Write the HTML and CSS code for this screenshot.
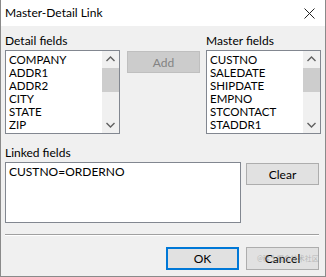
FILE: index.html
```html
<!DOCTYPE html>
<html lang="en">
<head>
    <meta charset="UTF-8">
    <title>Master-Detail Link</title>
    <link rel="stylesheet" href="styles.css">
</head>
<body>
    <div class="window">
        <div class="titlebar">
            <span class="title">Master-Detail Link</span>
            <svg class="close" width="11" height="11" viewBox="0 0 11 11">
                <path d="M0.5 0.5 L10.5 10.5 M10.5 0.5 L0.5 10.5" stroke="#222" stroke-width="1"/>
            </svg>
        </div>
        <div class="client">
            <div class="top-row">
                <div class="field-col">
                    <div class="label">Detail fields</div>
                    <div class="listbox">
                        <ul class="items">
                            <li>COMPANY</li>
                            <li>ADDR1</li>
                            <li>ADDR2</li>
                            <li>CITY</li>
                            <li>STATE</li>
                            <li>ZIP</li>
                        </ul>
                        <div class="scrollbar">
                            <svg class="arrow" width="17" height="17" viewBox="0 0 17 17"><path d="M4.5 10 L8.5 6 L12.5 10" fill="none" stroke="#606060" stroke-width="1.4"/></svg>
                            <div class="thumb"></div>
                            <div class="track"></div>
                            <svg class="arrow" width="17" height="17" viewBox="0 0 17 17"><path d="M4.5 7 L8.5 11 L12.5 7" fill="none" stroke="#606060" stroke-width="1.4"/></svg>
                        </div>
                    </div>
                </div>
                <div class="mid-col">
                    <button class="btn" disabled>Add</button>
                </div>
                <div class="field-col">
                    <div class="label">Master fields</div>
                    <div class="listbox">
                        <ul class="items">
                            <li>CUSTNO</li>
                            <li>SALEDATE</li>
                            <li>SHIPDATE</li>
                            <li>EMPNO</li>
                            <li>STCONTACT</li>
                            <li>STADDR1</li>
                        </ul>
                        <div class="scrollbar">
                            <svg class="arrow" width="17" height="17" viewBox="0 0 17 17"><path d="M4.5 10 L8.5 6 L12.5 10" fill="none" stroke="#606060" stroke-width="1.4"/></svg>
                            <div class="thumb"></div>
                            <div class="track"></div>
                            <svg class="arrow" width="17" height="17" viewBox="0 0 17 17"><path d="M4.5 7 L8.5 11 L12.5 7" fill="none" stroke="#606060" stroke-width="1.4"/></svg>
                        </div>
                    </div>
                </div>
            </div>

            <div class="label linked-label">Linked fields</div>
            <div class="linked-row">
                <div class="linked-box">CUSTNO=ORDERNO</div>
                <button class="btn">Clear</button>
            </div>

            <div class="separator"></div>

            <div class="bottom-row">
                <button class="btn btn-default">OK</button>
                <button class="btn">Cancel</button>
            </div>
        </div>
        <div class="watermark">@稀土掘金技术社区</div>
    </div>
</body>
</html>
```

FILE: styles.css
```css
body {
    margin: 0;
    font-family: Lato, "Noto Sans CJK SC", sans-serif;
    font-size: 12px;
    color: #000;
    background-color: #fff;
}
.window {
    position: relative;
    width: 326px;
    height: 277px;
    box-sizing: border-box;
    border-left: 1px solid #8a8a8a;
    border-right: 1px solid #8a8a8a;
    border-bottom: 1px solid #8a8a8a;
    background-color: #f0f0f0;
    overflow: hidden;
}
.titlebar {
    height: 26px;
    background-color: #fff;
    display: flex;
    align-items: center;
    justify-content: space-between;
    padding: 0 10px 0 4px;
}
.title {
    font-size: 12px;
    margin-top: -2px;
}
.close {
    display: block;
}
.client {
    padding: 7px 0 0 4px;
}
.top-row {
    display: flex;
}
.label {
    height: 16px;
    line-height: 16px;
}
.listbox {
    margin-top: 1px;
    width: 115px;
    height: 84px;
    box-sizing: border-box;
    border: 1px solid #828790;
    background-color: #fff;
    display: flex;
}
.items {
    flex: 1;
    list-style: none;
    margin: 0;
    padding: 2px 0 0 3px;
}
.items li {
    height: 13px;
    line-height: 13px;
    font-size: 11.5px;
    white-space: nowrap;
}
.scrollbar {
    width: 17px;
    background-color: #f0f0f0;
    display: flex;
    flex-direction: column;
}
.arrow {
    display: block;
}
.thumb {
    height: 24px;
    background-color: #cdcdcd;
}
.track {
    flex: 1;
}
.mid-col {
    padding: 18px 6px 0 7px;
}
.btn {
    display: block;
    width: 73px;
    height: 22px;
    padding: 0;
    font-family: inherit;
    font-size: 12px;
    color: #000;
    background-color: #e1e1e1;
    border: 1px solid #adadad;
    box-sizing: border-box;
}
.btn:disabled {
    background-color: #cccccc;
    border-color: #bfbfbf;
    color: #838383;
}
.btn-default {
    border: 2px solid #0078d7;
}
.linked-label {
    margin-top: 11px;
}
.linked-row {
    display: flex;
    margin-top: 1px;
}
.linked-box {
    width: 236px;
    height: 61px;
    box-sizing: border-box;
    border: 1px solid #828790;
    background-color: #fff;
    padding: 2px 0 0 3px;
    line-height: 14px;
}
.linked-row .btn {
    margin: 1px 0 0 5px;
}
.separator {
    margin: 11px 6px 0 0;
    border-top: 1px solid #a0a0a0;
    border-bottom: 1px solid #fff;
}
.bottom-row {
    display: flex;
    justify-content: flex-end;
    gap: 7px;
    margin: 11px 6px 0 0;
}
.bottom-row .btn {
    height: 23px;
}
.watermark {
    position: absolute;
    left: 256px;
    top: 253px;
    font-size: 7px;
    color: rgba(140, 140, 140, 0.5);
    white-space: nowrap;
}
```
